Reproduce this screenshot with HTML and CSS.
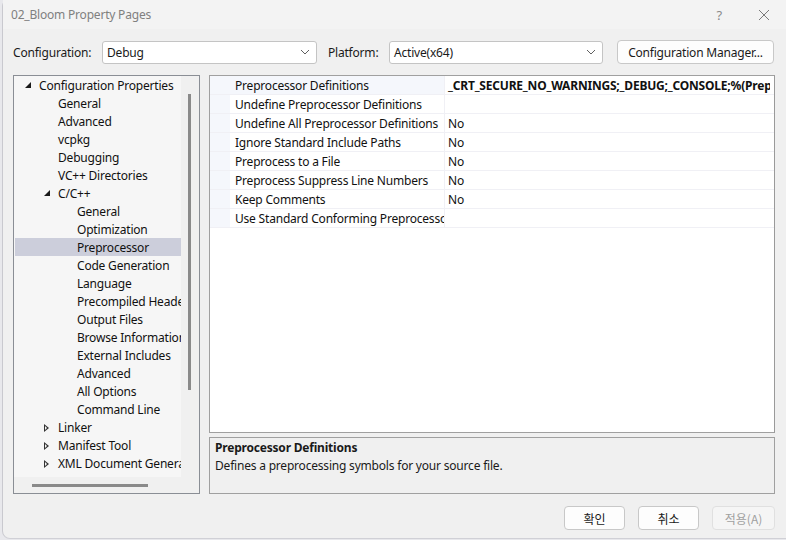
FILE: index.html
```html
<!DOCTYPE html>
<html>
<head>
<meta charset="utf-8">
<link rel="stylesheet" href="styles.css">
</head>
<body>
<div class="window">
  <div class="titlebar">
    <span class="title">02_Bloom Property Pages</span>
    <span class="tb-btns">
      <span class="help">?</span>
      <svg class="close" width="12" height="12" viewBox="0 0 12 12"><path d="M1 1L11 11M11 1L1 11" stroke="#7a7a7a" stroke-width="1" fill="none"/></svg>
    </span>
  </div>
  <div class="toprow">
    <span class="lbl">Configuration:</span>
    <div class="select sel1"><span>Debug</span><svg width="10" height="6" viewBox="0 0 10 6"><path d="M1 1L5 5L9 1" stroke="#606060" fill="none"/></svg></div>
    <span class="lbl lbl2">Platform:</span>
    <div class="select sel2"><span>Active(x64)</span><svg width="10" height="6" viewBox="0 0 10 6"><path d="M1 1L5 5L9 1" stroke="#606060" fill="none"/></svg></div>
    <div class="btn cfgbtn">Configuration Manager...</div>
  </div>
  <div class="main">
    <div class="tree">
      <div class="tree-top">
        <div class="tree-items">
          <div class="ti l0"><span class="exp"></span>Configuration Properties</div>
          <div class="ti l1">General</div>
          <div class="ti l1">Advanced</div>
          <div class="ti l1">vcpkg</div>
          <div class="ti l1">Debugging</div>
          <div class="ti l1">VC++ Directories</div>
          <div class="ti l1 hasx"><span class="exp"></span>C/C++</div>
          <div class="ti l2">General</div>
          <div class="ti l2">Optimization</div>
          <div class="ti l2 sel">Preprocessor</div>
          <div class="ti l2">Code Generation</div>
          <div class="ti l2">Language</div>
          <div class="ti l2">Precompiled Headers</div>
          <div class="ti l2">Output Files</div>
          <div class="ti l2">Browse Information</div>
          <div class="ti l2">External Includes</div>
          <div class="ti l2">Advanced</div>
          <div class="ti l2">All Options</div>
          <div class="ti l2">Command Line</div>
          <div class="ti l1 hasx"><span class="col"></span>Linker</div>
          <div class="ti l1 hasx"><span class="col"></span>Manifest Tool</div>
          <div class="ti l1 hasx"><span class="col"></span>XML Document Generator</div>
        </div>
        <div class="vscroll"><div class="vthumb"></div></div>
      </div>
      <div class="hscroll"><div class="hthumb"></div></div>
    </div>
    <div class="right">
      <div class="grid">
        <div class="row first"><div class="gut"></div><div class="name">Preprocessor Definitions</div><div class="val bold">_CRT_SECURE_NO_WARNINGS;_DEBUG;_CONSOLE;%(PreprocessorDefinitions)</div></div>
        <div class="row"><div class="gut"></div><div class="name">Undefine Preprocessor Definitions</div><div class="val"></div></div>
        <div class="row"><div class="gut"></div><div class="name">Undefine All Preprocessor Definitions</div><div class="val">No</div></div>
        <div class="row"><div class="gut"></div><div class="name">Ignore Standard Include Paths</div><div class="val">No</div></div>
        <div class="row"><div class="gut"></div><div class="name">Preprocess to a File</div><div class="val">No</div></div>
        <div class="row"><div class="gut"></div><div class="name">Preprocess Suppress Line Numbers</div><div class="val">No</div></div>
        <div class="row"><div class="gut"></div><div class="name">Keep Comments</div><div class="val">No</div></div>
        <div class="row"><div class="gut"></div><div class="name">Use Standard Conforming Preprocessor</div><div class="val"></div></div>
      </div>
      <div class="desc">
        <div class="dtitle">Preprocessor Definitions</div>
        <div class="dtext">Defines a preprocessing symbols for your source file.</div>
      </div>
    </div>
  </div>
  <div class="bottom">
    <div class="btn kbtn">확인</div>
    <div class="btn kbtn">취소</div>
    <div class="btn kbtn disabled">적용(A)</div>
  </div>
</div>
</body>
</html>
```
FILE: styles.css
```css
html, body {
  margin: 0;
  padding: 0;
  width: 786px;
  height: 540px;
  overflow: hidden;
  background: #e8e8ec;
}
.window {
  margin-left: 2px;
  width: 784px;
  height: 539px;
  background: #f0f0f0;
  border-left: 1px solid #c9c9cf;
  border-bottom: 1px solid #d0d0d6;
  border-bottom-left-radius: 8px;
  border-top-left-radius: 6px;
  box-sizing: border-box;
  font-family: "Noto Sans", "Noto Sans CJK KR", sans-serif;
  font-size: 12px;
  letter-spacing: -0.2px;
  color: #1a1a1a;
  display: flex;
  flex-direction: column;
}
.titlebar {
  height: 29px;
  background: #f3f3f3;
  display: flex;
  align-items: center;
  justify-content: space-between;
  padding-left: 8px;
  padding-right: 16px;
}
.title {
  color: #808080;
  font-size: 12px;
}
.tb-btns {
  display: flex;
  align-items: center;
  gap: 36px;
}
.help {
  color: #8a8a8a;
  font-size: 13px;
}
.toprow {
  display: flex;
  align-items: center;
  height: 24px;
  margin-top: 11px;
  padding-left: 10px;
}
.lbl {
  width: 89px;
  color: #1a1a1a;
}
.lbl2 {
  width: 61px;
  margin-left: 11px;
}
.select {
  height: 23px;
  box-sizing: border-box;
  border: 1px solid #c4c4c4;
  border-radius: 3px;
  background: #fff;
  display: flex;
  align-items: center;
  justify-content: space-between;
  padding-left: 4px;
  padding-right: 6px;
}
.sel1 { width: 215px; }
.sel2 { width: 214px; }
.btn {
  box-sizing: border-box;
  border: 1px solid #c8c8c8;
  border-radius: 4px;
  background: #fdfdfd;
  display: flex;
  align-items: center;
  justify-content: center;
}
.cfgbtn {
  width: 157px;
  height: 24px;
  margin-left: 14px;
}
.main {
  display: flex;
  margin-top: 11px;
  padding-left: 10px;
  gap: 9px;
  height: 419px;
}
.tree {
  width: 187px;
  box-sizing: border-box;
  border: 1px solid #8a8e95;
  display: flex;
  flex-direction: column;
}
.tree-top {
  display: flex;
  flex: 1;
  min-height: 0;
}
.tree-items {
  width: 166px;
  background: #f6f6f6;
  overflow: hidden;
  padding-left: 1px;
}
.ti {
  height: 18px;
  line-height: 20px;
  white-space: nowrap;
  overflow: hidden;
  position: relative;
  color: #111;
}
.l0 { padding-left: 24px; }
.l1 { padding-left: 43px; }
.l2 { padding-left: 62px; }
.ti.sel { background: #cccedb; }
.exp, .col {
  position: absolute;
  top: 6px;
  width: 0;
  height: 0;
}
.l0 .exp { left: 10px; }
.l1 .exp, .l1 .col { left: 29px; }
.exp {
  border-left: 6px solid transparent;
  border-bottom: 6px solid #1a1a1a;
}
.col {
  top: 6px;
  width: 5px;
  height: 7px;
}
.col::before {
  content: "";
  position: absolute;
  left: 0;
  top: 0;
  border-top: 4px solid transparent;
  border-bottom: 4px solid transparent;
  border-left: 5px solid #333;
}
.col::after {
  content: "";
  position: absolute;
  left: 1px;
  top: 2px;
  border-top: 2px solid transparent;
  border-bottom: 2px solid transparent;
  border-left: 2.5px solid #f6f6f6;
}
.vscroll {
  flex: 1;
  background: #f0f0f0;
  position: relative;
}
.vthumb {
  position: absolute;
  left: 7px;
  top: 18px;
  width: 3px;
  height: 296px;
  background: #8a8a8a;
}
.hscroll {
  height: 16px;
  background: #f0f0f0;
  position: relative;
}
.hthumb {
  position: absolute;
  left: 18px;
  top: 7px;
  height: 3px;
  width: 116px;
  background: #8a8a8a;
}
.right {
  width: 566px;
  display: flex;
  flex-direction: column;
  gap: 4px;
}
.grid {
  height: 358px;
  box-sizing: border-box;
  border: 1px solid #a0a0a0;
  border-right-color: #9a9a9a;
  background: #fff;
  overflow: hidden;
}
.row {
  display: flex;
  height: 19px;
  box-sizing: border-box;
  border-bottom: 1px solid #f0f0f5;
}
.gut {
  width: 20px;
  background: #f5f7fc;
  flex: none;
}
.name {
  width: 215px;
  flex: none;
  padding-left: 5px;
  box-sizing: border-box;
  line-height: 20px;
  white-space: nowrap;
  overflow: hidden;
  border-right: 1px solid #f0f0f5;
  color: #111;
}
.first .name { background: #f5f7fc; }
.val {
  flex: 1;
  padding-left: 3px;
  line-height: 20px;
  white-space: nowrap;
  overflow: hidden;
  color: #111;
  margin-right: 4px;
}
.bold { font-weight: bold; }
.desc {
  flex: 1;
  box-sizing: border-box;
  border: 1px solid #a0a0a0;
  background: #f0f0f0;
  padding: 0 5px;
}
.dtitle {
  font-weight: bold;
  line-height: 19px;
}
.dtext {
  line-height: 18px;
}
.bottom {
  display: flex;
  justify-content: flex-end;
  gap: 13px;
  padding-right: 11px;
  margin-top: 12px;
}
.kbtn {
  width: 61px;
  height: 24px;
  font-family: "Noto Sans CJK KR", sans-serif;
  font-size: 12px;
  letter-spacing: 0;
}
.disabled {
  color: #a0a0a0;
  border-color: #e0e0e0;
  background: #f5f5f5;
  width: 63px;
}
```
